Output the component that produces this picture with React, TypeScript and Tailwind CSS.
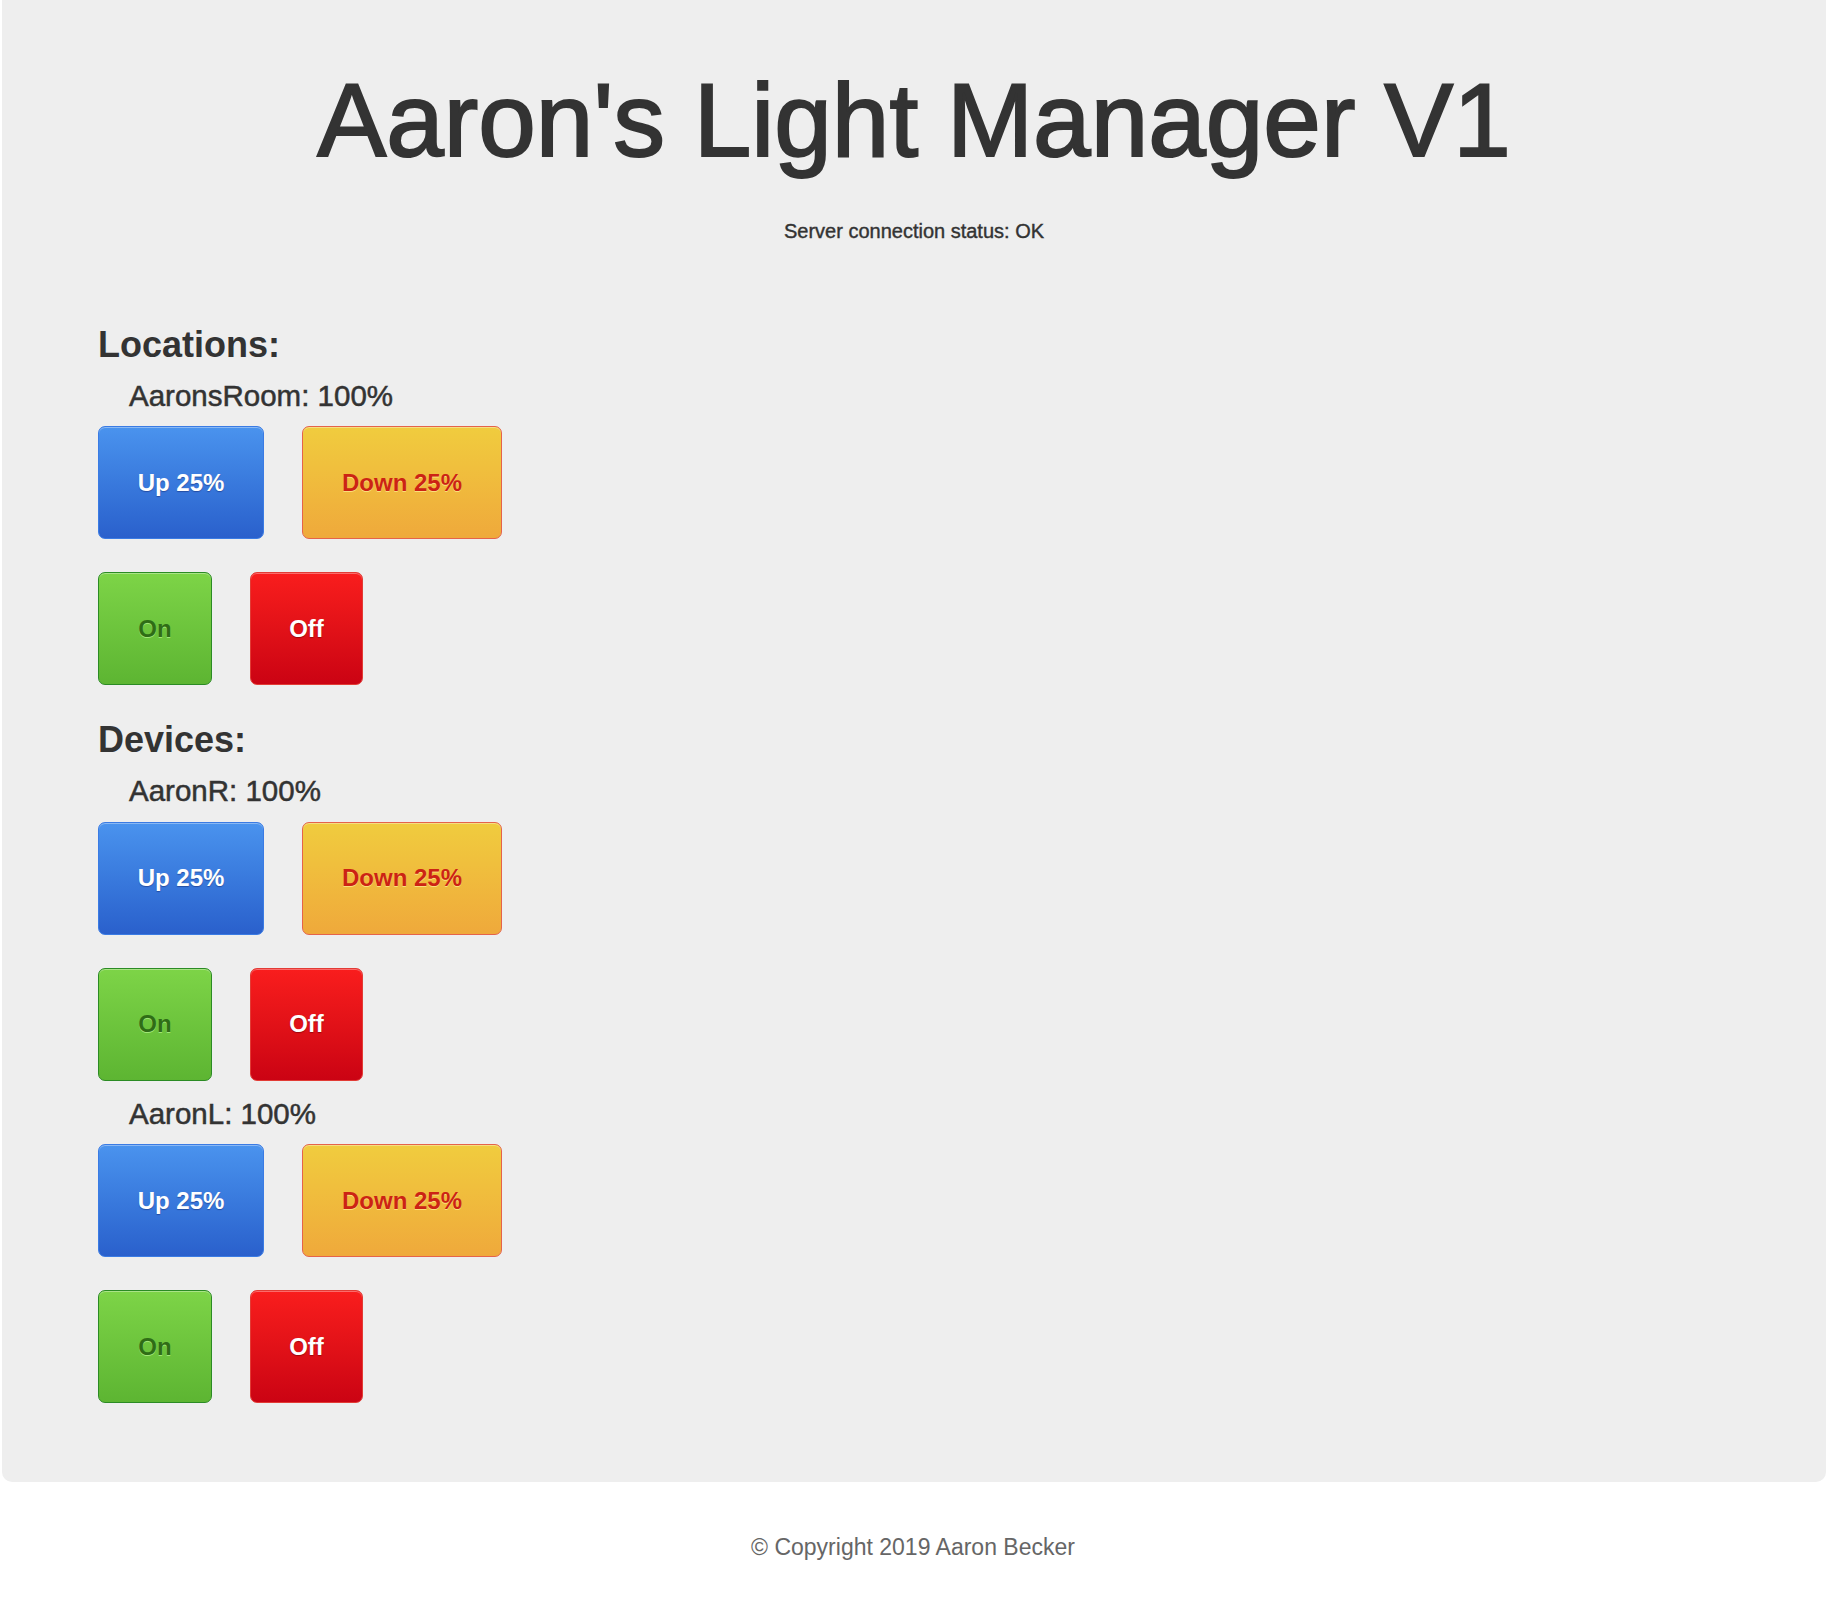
import React from 'react';

type Item = { name: string; level: number };
type Section = { title: string; items: Item[] };

const sections: Section[] = [
  { title: 'Locations:', items: [{ name: 'AaronsRoom', level: 100 }] },
  {
    title: 'Devices:',
    items: [
      { name: 'AaronR', level: 100 },
      { name: 'AaronL', level: 100 },
    ],
  },
];

const base =
  'h-[113px] rounded-[7px] border text-[24px] font-bold leading-none flex items-center justify-center shadow-[inset_0_1px_0_rgba(255,255,255,0.35)]';

function LightControls({ item }: { item: Item }) {
  return (
    <div className="flex flex-col">
      <div className="mt-[18px] pl-[31px] text-[29.5px] leading-none text-[#333] [-webkit-text-stroke:0.5px_#333]">
        {item.name}: {item.level}%
      </div>
      <div className="mt-[16px] flex gap-[38px]">
        <button
          className={`${base} w-[166px] border-[#3a7be4] bg-linear-to-b from-[#4a93ee] to-[#2a60cc] text-white [text-shadow:0_1px_1px_rgba(0,0,60,0.35)]`}
        >
          Up 25%
        </button>
        <button
          className={`${base} w-[200px] border-[#e5634a] bg-linear-to-b from-[#f0cc3e] to-[#efa93b] text-[#cc2314] [text-shadow:0_1px_0_rgba(255,235,140,0.8)]`}
        >
          Down 25%
        </button>
      </div>
      <div className="mt-[33px] flex gap-[38px]">
        <button
          className={`${base} w-[114px] border-[#2b8b24] bg-linear-to-b from-[#7dd447] to-[#5db532] text-[#2f6d16] [text-shadow:0_1px_0_rgba(200,255,160,0.6)]`}
        >
          On
        </button>
        <button
          className={`${base} w-[113px] border-[#e23b35] bg-linear-to-b from-[#f91d1d] to-[#cb0313] text-white [text-shadow:0_1px_1px_rgba(90,0,0,0.5)]`}
        >
          Off
        </button>
      </div>
    </div>
  );
}

export default function App() {
  return (
    <div className="min-h-[1616px] bg-white font-['Liberation_Sans',Arial,sans-serif] text-[#333]">
      <div className="ml-[2px] rounded-b-[10px] bg-[#eeeeee] pt-[69px] pb-[79px] pl-[96px] pr-[96px]">
        <h1 className="-ml-[96px] -mr-[96px] text-center text-[103.5px] leading-none [-webkit-text-stroke:2px_#333]">
          Aaron's Light Manager V1
        </h1>
        <p className="-ml-[96px] -mr-[96px] mt-[48px] mb-[49px] text-center text-[20px] leading-none [-webkit-text-stroke:0.4px_#333]">
          Server connection status: OK
        </p>
        {sections.map((section) => (
          <div key={section.title} className="flex flex-col">
            <h2 className="mt-[37px] text-[36px] font-bold leading-none">{section.title}</h2>
            {section.items.map((item) => (
              <LightControls key={item.name} item={item} />
            ))}
          </div>
        ))}
      </div>
      <footer className="pt-[54px] text-center text-[23px] leading-none text-[#666]">
        © Copyright 2019 Aaron Becker
      </footer>
    </div>
  );
}
